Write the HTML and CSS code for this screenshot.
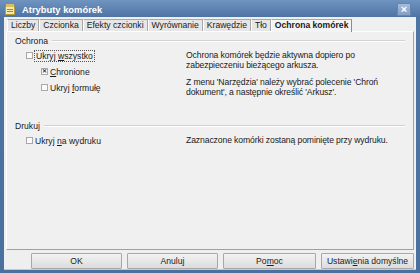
FILE: index.html
```html
<!DOCTYPE html>
<html lang="pl">
<head>
<meta charset="utf-8">
<link rel="stylesheet" href="styles.css">
</head>
<body>
<div class="window">
  <div class="titlebar">
    <svg class="appicon" width="10" height="11" viewBox="0 0 10 11">
      <rect x="0.5" y="2.5" width="9" height="8" fill="#f4e9a8" stroke="#b59a3a"/>
      <rect x="1" y="0" width="8" height="3" fill="#d8c060"/>
      <line x1="2" y1="5.5" x2="8" y2="5.5" stroke="#a08a40"/>
      <line x1="2" y1="7.5" x2="8" y2="7.5" stroke="#a08a40"/>
    </svg>
    <span class="title">Atrybuty komórek</span>
    <span class="close">×</span>
  </div>
  <div class="client">
    <div class="tabs">
      <span class="tab">Liczby</span>
      <span class="tab">Czcionka</span>
      <span class="tab">Efekty czcionki</span>
      <span class="tab">Wyrównanie</span>
      <span class="tab">Krawędzie</span>
      <span class="tab">Tło</span>
      <span class="tab active">Ochrona komórek</span>
    </div>
    <div class="pane">
      <div class="group-head"><span>Ochrona</span><span class="rule"></span></div>
      <div class="group-body">
        <div class="opts">
          <label class="check focus"><span class="box"></span><span class="lbl">Ukryj <u>w</u>szystko</span></label>
          <label class="check sub"><span class="box checked">✕</span><span><u>C</u>hronione</span></label>
          <label class="check sub"><span class="box"></span><span>Ukryj <u>f</u>ormułę</span></label>
        </div>
        <div class="notes">
          <p>Ochrona komórek będzie aktywna dopiero po<br>zabezpieczeniu bieżącego arkusza.</p>
          <p>Z menu 'Narzędzia' należy wybrać polecenie 'Chroń<br>dokument', a następnie określić 'Arkusz'.</p>
        </div>
      </div>
      <div class="group-head print"><span>Drukuj</span><span class="rule"></span></div>
      <div class="group-body">
        <div class="opts">
          <label class="check"><span class="box"></span><span>Ukryj <u>n</u>a wydruku</span></label>
        </div>
        <div class="notes single">
          <p>Zaznaczone komórki zostaną pominięte przy wydruku.</p>
        </div>
      </div>
    </div>
    <div class="buttons">
      <button class="btn">OK</button>
      <button class="btn">Anuluj</button>
      <button class="btn wide">Po<u>m</u>oc</button>
      <button class="btn wide">Ustawi<u>e</u>nia domyślne</button>
    </div>
  </div>
</div>
</body>
</html>
```
FILE: styles.css
```css
* { box-sizing: border-box; }
html, body { margin: 0; padding: 0; }
body {
  width: 420px;
  height: 273px;
  overflow: hidden;
  font-family: "Liberation Sans", Arial, sans-serif;
  font-size: 8.6px;
  color: #1a1a1a;
  background: #4f76a6;
}
.window {
  width: 420px;
  height: 273px;
  display: flex;
  flex-direction: column;
  background: linear-gradient(#7094c0, #4e74a4 17px, #4a70a0);
}
.titlebar {
  height: 17px;
  display: flex;
  align-items: center;
  padding: 1px 4px 0 5px;
  color: #fff;
}
.appicon { margin-right: 7px; }
.title { font-weight: bold; font-size: 9.4px; flex: 1; }
.close {
  width: 14px;
  height: 13px;
  margin-right: 5px;
  background: linear-gradient(#a3bad8, #84a1c6);
  border: 1px solid #6584ae;
  color: #fff;
  font-weight: bold;
  font-size: 11px;
  line-height: 10px;
  text-align: center;
}
.client {
  flex: 1;
  margin: 0 4px 3px 4px;
  background: #efefef;
  display: flex;
  flex-direction: column;
  padding: 2px 2px 0 2px;
  border-bottom: 1px solid #c8c8c8;
}
.tabs {
  display: flex;
  height: 12px;
  align-items: flex-end;
  padding-left: 1px;
}
.tab {
  height: 12px;
  line-height: 11px;
  padding: 0 3px;
  border: 1px solid #a8a8a8;
  border-bottom: none;
  border-left-color: #fff;
  background: #e6e6e6;
  white-space: nowrap;
}
.tab.active {
  height: 13px;
  font-weight: bold;
  background: #f4f4f4;
  border-right-color: #8c8c8c;
  position: relative;
  top: 1px;
}
.pane {
  height: 219px;
  border: 1px solid #a0a0a0;
  border-top-color: #fff;
  border-left-color: #fff;
  background: #f0f0f0;
  padding: 3px 8px 0 8px;
}
.group-head {
  display: flex;
  align-items: center;
  height: 12px;
}
.group-head.print { margin-top: 16px; }
.rule {
  flex: 1;
  height: 2px;
  margin-left: 4px;
  margin-right: 0;
  border-top: 1px solid #d2d2d2;
  border-bottom: 1px solid #fff;
}
.group-body {
  display: flex;
}
.opts {
  width: 171px;
  flex-shrink: 0;
  padding-left: 11px;
  display: flex;
  flex-direction: column;
}
.check {
  display: flex;
  align-items: center;
  height: 15px;
  margin-top: 1px;
}
.check.sub { padding-left: 15px; height: 15px; }
.check u, .btn u { text-decoration: underline; }
.box {
  width: 7px;
  height: 7px;
  border: 1px solid #a8a8a8;
  background: #fafafa;
  font-size: 6px;
  line-height: 5px;
  text-align: center;
  color: #333;
  font-weight: bold;
  margin-right: 2px;
}
.focus .lbl { outline: 1px dotted #555; padding: 0 1px; }
.notes { padding-top: 3px; letter-spacing: -0.1px; }
.notes p { margin: 0 0 7px 0; line-height: 10px; }
.buttons {
  display: flex;
  justify-content: flex-end;
  gap: 5px;
  padding: 3px 0 0 0;
}
.btn {
  width: 91px;
  height: 16px;
  font-family: inherit;
  font-size: 8.6px;
  color: #222;
  background: linear-gradient(#f3f3f3, #dcdcdc);
  border: 1px solid #a8a8a8;
  border-radius: 1px;
  padding: 0;
  line-height: 13px;
}
.btn.wide { width: 93px; }
```
